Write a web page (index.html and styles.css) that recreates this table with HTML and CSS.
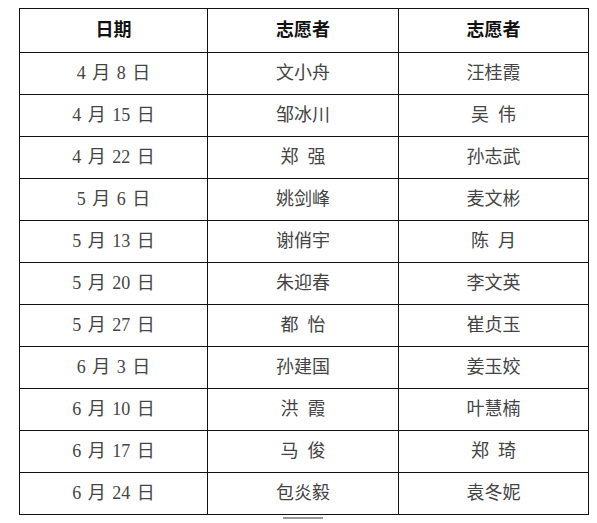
FILE: index.html
```html
<!DOCTYPE html>
<html lang="zh">
<head>
<meta charset="utf-8">
<link rel="stylesheet" href="styles.css">
</head>
<body>
<div class="page">
<table class="schedule">
<colgroup><col class="c1"><col class="c2"><col class="c3"></colgroup>
<thead>
<tr><th>日期</th><th>志愿者</th><th>志愿者</th></tr>
</thead>
<tbody>
<tr><td>4 月 8 日</td><td>文小舟</td><td>汪桂霞</td></tr>
<tr><td>4 月 15 日</td><td>邹冰川</td><td>吴&ensp;伟</td></tr>
<tr><td>4 月 22 日</td><td>郑&ensp;强</td><td>孙志武</td></tr>
<tr><td>5 月 6 日</td><td>姚剑峰</td><td>麦文彬</td></tr>
<tr><td>5 月 13 日</td><td>谢俏宇</td><td>陈&ensp;月</td></tr>
<tr><td>5 月 20 日</td><td>朱迎春</td><td>李文英</td></tr>
<tr><td>5 月 27 日</td><td>都&ensp;怡</td><td>崔贞玉</td></tr>
<tr><td>6 月 3 日</td><td>孙建国</td><td>姜玉姣</td></tr>
<tr><td>6 月 10 日</td><td>洪&ensp;霞</td><td>叶慧楠</td></tr>
<tr><td>6 月 17 日</td><td>马&ensp;俊</td><td>郑&ensp;琦</td></tr>
<tr><td>6 月 24 日</td><td>包炎毅</td><td>袁冬妮</td></tr>
</tbody>
</table>
<div class="scrollmark"></div>
</div>
</body>
</html>
```
FILE: styles.css
```css
html, body {
  margin: 0;
  padding: 0;
  background: #ffffff;
}
.page {
  padding: 8px 0 0 19px;
}
.schedule {
  border-collapse: collapse;
  table-layout: fixed;
  width: 569px;
  font-family: "Liberation Serif", "Noto Sans CJK SC", serif;
  font-size: 18px;
}
.c1 { width: 188px; }
.c2 { width: 191px; }
.c3 { width: 190px; }
.schedule th,
.schedule td {
  border: 1.3px solid #111;
  padding: 0;
  text-align: center;
  vertical-align: middle;
  height: 41.05px;
  line-height: 20px;
  word-spacing: 2px;
}
.schedule th {
  font-weight: 700;
  color: #111;
  height: 42.5px;
}
.schedule td {
  font-weight: 400;
  color: #444;
}
.scrollmark {
  width: 40px;
  height: 2px;
  background: #9a9a9a;
  margin: 2px 0 0 264px;
}
```
